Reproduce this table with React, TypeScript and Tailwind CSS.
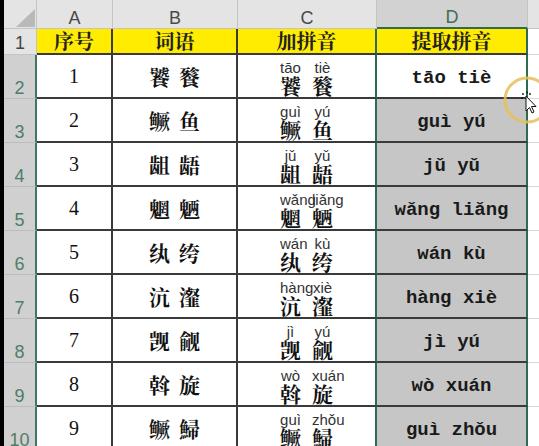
import React from "react";

const rows = [
  { n: 1, w: ["饕", "餮"], p: ["tāo", "tiè"] },
  { n: 2, w: ["鳜", "鱼"], p: ["guì", "yú"] },
  { n: 3, w: ["龃", "龉"], p: ["jǔ", "yǔ"] },
  { n: 4, w: ["魍", "魉"], p: ["wǎng", "liǎng"] },
  { n: 5, w: ["纨", "绔"], p: ["wán", "kù"] },
  { n: 6, w: ["沆", "瀣"], p: ["hàng", "xiè"] },
  { n: 7, w: ["觊", "觎"], p: ["jì", "yú"] },
  { n: 8, w: ["斡", "旋"], p: ["wò", "xuán"] },
  { n: 9, w: ["鳜", "鯞"], p: ["guì", "zhǒu"] },
];

const cjk = { fontFamily: '"Noto Serif CJK SC", "Noto Sans CJK SC", serif' };
const sans = { fontFamily: '"Liberation Sans", Arial, sans-serif' };
const serif = { fontFamily: '"Liberation Serif", "Noto Sans CJK SC", serif' };
const mono = { fontFamily: '"Liberation Mono", "Noto Sans CJK SC", monospace' };

export default function App() {
  return (
    <div className="relative w-[539px] h-[446px] overflow-hidden bg-white flex">
      <div className="w-[4px] h-full bg-black shrink-0" />
      <div className="grid grid-cols-[33px_76px_125px_139px_151px_1fr] grid-rows-[29px_26px_repeat(9,44px)] flex-1">
        {/* column header row */}
        <div className="bg-[#e4e4e4] border-r border-b border-[#c4c4c4] relative">
          <svg className="absolute left-[12px] top-[9px]" width="19" height="18" viewBox="0 0 19 18">
            <polygon points="19,0 19,18 0,18" fill="#b9b9b9" />
          </svg>
        </div>
        {["A", "B", "C"].map((c) => (
          <div
            key={c}
            className="bg-[#e4e4e4] border-r border-b border-[#c4c4c4] flex items-end justify-center pb-[1px] text-[18px] leading-none text-[#4a4a4a]"
            style={sans}
          >
            {c}
          </div>
        ))}
        <div
          className="bg-[#d2d2d2] border-r border-[#c4c4c4] border-b-2 border-b-[#2f6b50] flex items-end justify-center pb-[1px] text-[18px] leading-none text-[#3f6e5a]"
          style={sans}
        >
          D
        </div>
        <div className="bg-[#e4e4e4] border-b border-[#c4c4c4]" />

        {/* row 1: headers */}
        <div className="bg-[#e4e4e4] border-r border-b border-[#c4c4c4] flex items-end justify-center text-[18px] leading-none text-[#444] pb-[2px]" style={sans}>
          1
        </div>
        {["序号", "词语", "加拼音"].map((h, i) => (
          <div
            key={h}
            className={`bg-[#ffec00] border-b-2 border-[#3a3a3a] ${i < 2 ? "border-r-2" : "border-r-2 border-r-[#2f6b50]"} flex items-center justify-center text-[20px] font-bold leading-none text-[#222]`}
            style={cjk}
          >
            {h}
          </div>
        ))}
        <div className="bg-[#ffec00] border-b-2 border-[#3a3a3a] border-r-2 border-r-[#2f6b50] flex items-center justify-center text-[20px] font-bold leading-none text-[#222]" style={cjk}>
          提取拼音
        </div>
        <div className="bg-white border-b border-[#d8d8d8]" />

        {rows.map((r, idx) => (
          <React.Fragment key={r.n}>
            <div
              className="bg-[#d0d0d0] border-r-2 border-r-[#3d7a5d] border-b border-[#bcbcbc] flex items-end justify-center text-[18px] leading-none text-[#4f7d68] pb-[1px]"
              style={sans}
            >
              {r.n + 1}
            </div>
            <div
              className="bg-white border-r-2 border-b-2 border-[#3a3a3a] flex items-center justify-center text-[20px] leading-none text-[#111]"
              style={serif}
            >
              {r.n}
            </div>
            <div
              className="bg-white border-r-2 border-b-2 border-[#3a3a3a] flex items-center justify-center text-[21px] font-bold leading-none text-[#111]"
              style={cjk}
            >
              {r.w[0]}
              <span className="inline-block w-[9px]" />
              {r.w[1]}
            </div>
            <div className="bg-white border-b-2 border-[#3a3a3a] border-r-2 border-r-[#2f6b50] flex items-end justify-center gap-[11px] pb-[1px]">
              {r.w.map((ch, k) => (
                <div key={k} className="flex flex-col w-[21px]">
                  <div className="flex w-[21px] [justify-content:safe_center]">
                    <span className="text-[15px] leading-[15px] text-[#333] whitespace-nowrap" style={sans}>
                      {r.p[k]}
                    </span>
                  </div>
                  <span className="text-[21px] leading-[21px] font-bold text-[#111] text-center" style={cjk}>
                    {ch}
                  </span>
                </div>
              ))}
            </div>
            <div
              className={`${idx === 0 ? "bg-white" : "bg-[#c6c6c6]"} border-b-2 border-[#3a3a3a] border-r-2 border-r-[#2f6b50] flex items-center justify-center pt-[4px] text-[19px] font-bold leading-none text-[#1a1a1a] whitespace-pre`}
              style={mono}
            >
              {r.p.join(" ")}
            </div>
            <div className="bg-white border-b border-[#d8d8d8]" />
          </React.Fragment>
        ))}
      </div>

      {/* cursor highlight */}
      <svg className="absolute left-[500px] top-[74px]" width="60" height="54" viewBox="0 0 60 54">
        <circle cx="27" cy="26" r="22" fill="none" stroke="#e6bf57" strokeOpacity="0.85" strokeWidth="3" />
        <path d="M26 22 L26 37 L29.5 33.5 L32 39 L34 38 L31.5 32.5 L36 32.5 Z" fill="#fff" stroke="#111" strokeWidth="1" />
        <circle cx="23" cy="20" r="0.9" fill="#111" />
        <circle cx="27" cy="18.5" r="0.9" fill="#111" />
        <circle cx="22" cy="24" r="0.9" fill="#111" />
        <circle cx="30" cy="20" r="0.9" fill="#111" />
      </svg>
    </div>
  );
}
